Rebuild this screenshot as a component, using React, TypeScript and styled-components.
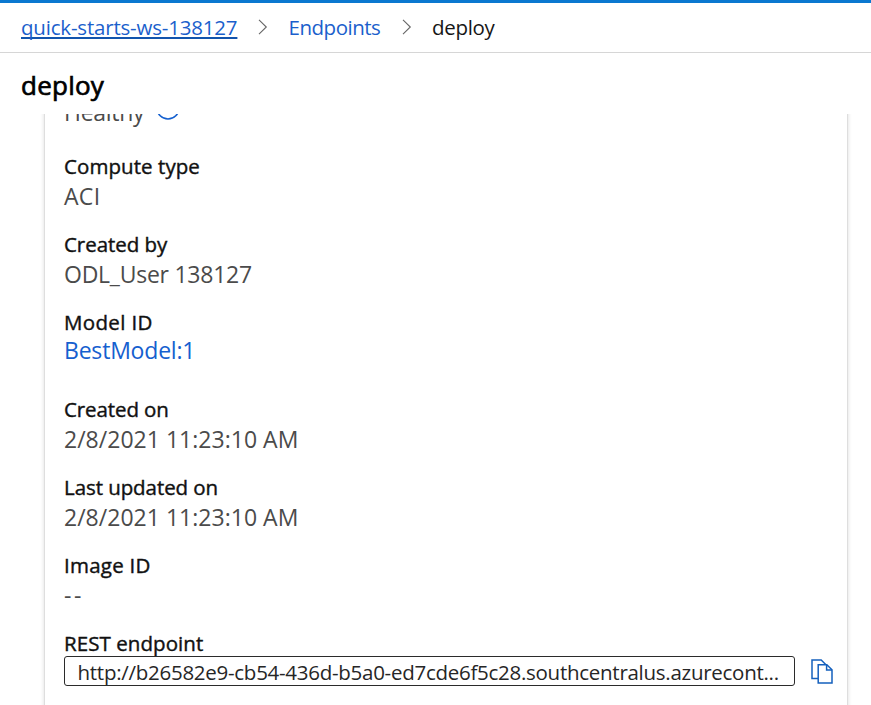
import React from "react";
import styled, { createGlobalStyle } from "styled-components";

const GlobalStyle = createGlobalStyle`
  * { box-sizing: border-box; }
  body {
    margin: 0;
    background: #fff;
    color: #111;
    font-family: "Open Sans", "Noto Sans", sans-serif;
    overflow: hidden;
  }
`;

const Page = styled.div`
  display: flex;
  flex-direction: column;
  height: 705px;
  border-top: 3px solid #0b78d0;
  overflow: hidden;
`;

const Breadcrumb = styled.nav`
  display: flex;
  align-items: flex-start;
  height: 50px;
  padding: 9px 0 0 21px;
  border-bottom: 1px solid #d6d6d6;
  font-size: 20.5px;
  line-height: 30px;
  flex: none;
`;

const Crumb = styled.a<{ $width: number; $spacing: number; $underlined?: boolean; $current?: boolean }>`
  width: ${(p) => p.$width}px;
  height: 30px;
  white-space: nowrap;
  letter-spacing: ${(p) => p.$spacing}px;
  color: ${(p) => (p.$current ? "#161616" : "#1b5fcc")};
  text-decoration: ${(p) => (p.$underlined ? "underline" : "none")};
  text-decoration-color: #1254ad;
  text-decoration-thickness: 2px;
  text-underline-offset: 2px;
  text-decoration-skip-ink: none;
`;

const Separator = styled.svg`
  width: 10px;
  height: 16px;
  margin: 7px 20.5px 0 21px;
  flex: none;
`;

const Title = styled.h1`
  margin: 0;
  height: 61px;
  padding: 14px 0 0 21px;
  font-size: 26px;
  line-height: 36px;
  font-weight: 400;
  letter-spacing: 0.25px;
  -webkit-text-stroke: 0.7px #000;
  color: #000;
  flex: none;
`;

const ScrollArea = styled.main`
  flex: 1;
  min-height: 0;
  padding: 0 23px 0 44px;
  overflow: hidden;
`;

const Card = styled.section`
  height: 640px;
  margin-top: -20px;
  padding: 2px 13px 0 19px;
  border: 1px solid #dedede;
  box-shadow: 0 1px 4px rgba(0, 0, 0, 0.14);
`;

const Status = styled.div`
  display: flex;
  gap: 12px;
  margin-bottom: 24px;
`;

const Field = styled.div<{ $after?: number }>`
  margin-bottom: ${(p) => p.$after ?? 18}px;
`;

const Label = styled.div<{ $spacing?: number }>`
  font-size: 20.5px;
  line-height: 30px;
  letter-spacing: ${(p) => p.$spacing ?? 0}px;
  -webkit-text-stroke: 0.4px #111;
  color: #111;
`;

const Value = styled.div<{ $spacing?: number; $link?: boolean }>`
  margin-top: ${(p) => (p.$link ? -2 : 0)}px;
  font-size: 23px;
  line-height: 30px;
  letter-spacing: ${(p) => p.$spacing ?? 0}px;
  color: ${(p) => (p.$link ? "#1560cf" : "#4b4b4b")};
`;

const StatusIcon = styled.svg`
  width: 24px;
  height: 24px;
`;

const EndpointRow = styled.div`
  display: flex;
  align-items: center;
  gap: 16px;
  margin-top: -2px;
`;

const EndpointBox = styled.div`
  width: 731px;
  height: 30px;
  padding: 1px 0 0 12.5px;
  border: 1px solid #2b2b2b;
  border-radius: 3px;
  font-size: 20.5px;
  line-height: 29px;
  letter-spacing: -0.27px;
  white-space: nowrap;
  color: #262626;
`;

const CopyIcon = styled.svg`
  width: 22px;
  height: 26px;
  margin-top: 1px;
`;

const Chevron = () => (
  <Separator viewBox="0 0 10 16" fill="none" stroke="#666" strokeWidth="1.1">
    <path d="M1 .8 8.3 8 1 15.2" />
  </Separator>
);

interface FieldData {
  label: string;
  value: string;
  labelSpacing?: number;
  valueSpacing?: number;
  link?: boolean;
  after?: number;
}

const fields: FieldData[] = [
  { label: "Compute type", value: "ACI", labelSpacing: 0.07, valueSpacing: 0.3 },
  { label: "Created by", value: "ODL_User 138127", labelSpacing: -0.05, valueSpacing: -0.25 },
  { label: "Model ID", value: "BestModel:1", labelSpacing: 0.35, valueSpacing: -0.2, link: true, after: 29 },
  { label: "Created on", value: "2/8/2021 11:23:10 AM", labelSpacing: -0.1, valueSpacing: 0.02 },
  { label: "Last updated on", value: "2/8/2021 11:23:10 AM", labelSpacing: -0.07, valueSpacing: 0.02 },
  { label: "Image ID", value: "--", labelSpacing: 0.25, valueSpacing: 2.5 },
];

export default function App() {
  return (
    <>
      <GlobalStyle />
      <Page>
        <Breadcrumb>
          <Crumb $width={216} $spacing={-0.19} $underlined>quick-starts-ws-138127</Crumb>
          <Chevron />
          <Crumb $width={92} $spacing={-0.48}>Endpoints</Crumb>
          <Chevron />
          <Crumb $width={64} $spacing={-0.3} $current>deploy</Crumb>
        </Breadcrumb>
        <Title>deploy</Title>
        <ScrollArea>
          <Card>
            <Status>
              <Value $spacing={-0.3}>Healthy</Value>
              <StatusIcon viewBox="0 0 24 24" fill="none" stroke="#1560cf" strokeWidth="1.6">
                <circle cx="12" cy="11" r="11" />
                <path d="M12 10v6M12 5.5v2" />
              </StatusIcon>
            </Status>
            {fields.map((f) => (
              <Field key={f.label} $after={f.after}>
                <Label $spacing={f.labelSpacing}>{f.label}</Label>
                <Value $spacing={f.valueSpacing} $link={f.link}>{f.value}</Value>
              </Field>
            ))}
            <Label $spacing={0.07}>REST endpoint</Label>
            <EndpointRow>
              <EndpointBox>http://b26582e9-cb54-436d-b5a0-ed7cde6f5c28.southcentralus.azurecont...</EndpointBox>
              <CopyIcon viewBox="0 0 22 26" fill="none" stroke="#1560bd" strokeWidth="1.5">
                <path d="M7 19.5H1V1h9.2l4.5 4.5" />
                <path d="M7.2 5.8h8.6l5.2 5V24H7.2z" />
                <path d="M15.6 5.8v5.2H21" />
              </CopyIcon>
            </EndpointRow>
          </Card>
        </ScrollArea>
      </Page>
    </>
  );
}
